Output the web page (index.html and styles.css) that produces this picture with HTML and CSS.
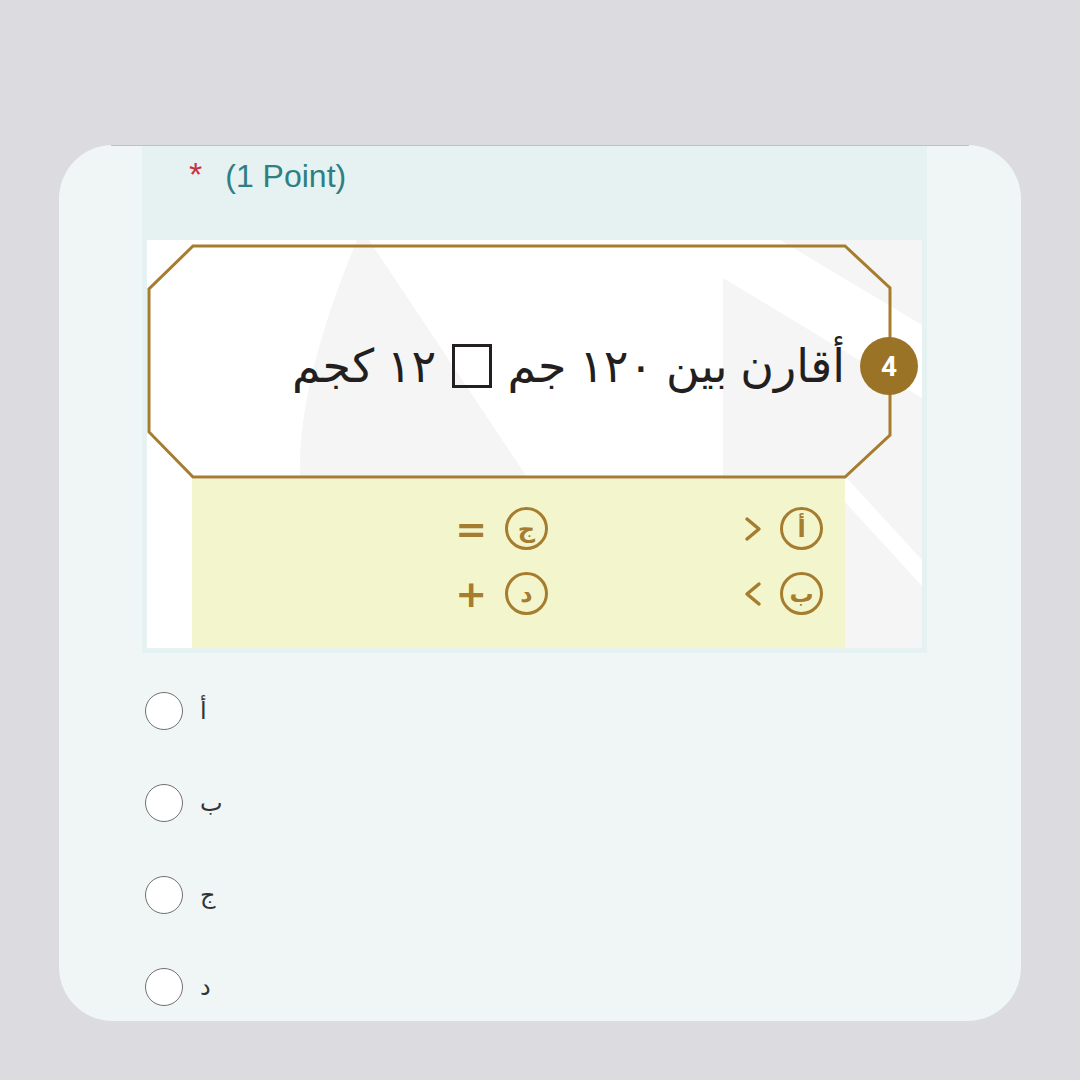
FILE: index.html
```html
<!DOCTYPE html>
<html lang="en">
<head>
<meta charset="utf-8">
<title>Question</title>
<link rel="stylesheet" href="styles.css">
</head>
<body>
<div class="card">
  <div class="topline"></div>
  <div class="panel">
    <div class="header">
      <span class="req">*</span>
      <span class="points">(1 Point)</span>
    </div>
    <div class="picture">
      <svg class="deco" viewBox="0 0 775 408" width="775" height="408">
        <polygon points="633,0 775,0 775,85" fill="#f5f5f5"/>
        <polygon points="576,38 775,158 775,408 576,408" fill="#f5f5f5"/>
        <polygon points="698,236 775,320 775,346 698,262" fill="#ffffff"/>
        <path d="M210,0 L222,0 L380,237 L153,237 Q150,144 210,0 Z" fill="#f5f5f5"/>
        <polygon points="46,6 698,6 743,48 743,195 698,237 46,237 2,192 2,49" fill="none" stroke="#a67c2e" stroke-width="3"/>
      </svg>
      <div class="q-row">
        <p class="q-text" dir="rtl">أقارن بين ١٢٠ جم <span class="blank"></span> ١٢ كجم</p>
        <span class="badge">4</span>
      </div>
      <div class="choices" dir="rtl">
        <div class="choice"><span class="sym">
          <svg width="18" height="26" viewBox="0 0 18 26"><polyline points="3,3 15,13 3,23" fill="none" stroke="#a67c2e" stroke-width="3.5" stroke-linecap="round" stroke-linejoin="round"/></svg>
        </span><span class="ring">أ</span></div>
        <div class="choice"><span class="sym eq">=</span><span class="ring">ج</span></div>
        <div class="choice"><span class="sym">
          <svg width="18" height="26" viewBox="0 0 18 26"><polyline points="15,3 3,13 15,23" fill="none" stroke="#a67c2e" stroke-width="3.5" stroke-linecap="round" stroke-linejoin="round"/></svg>
        </span><span class="ring">ب</span></div>
        <div class="choice"><span class="sym eq">+</span><span class="ring">د</span></div>
      </div>
    </div>
  </div>
  <ul class="options">
    <li class="option"><span class="radio"></span><span class="label">أ</span></li>
    <li class="option"><span class="radio"></span><span class="label">ب</span></li>
    <li class="option"><span class="radio"></span><span class="label">ج</span></li>
    <li class="option"><span class="radio"></span><span class="label">د</span></li>
  </ul>
</div>
</body>
</html>
```

FILE: styles.css
```css
* { box-sizing: border-box; }

html, body {
  margin: 0;
  padding: 0;
  background: #dcdbe0;
  font-family: "Liberation Sans", "DejaVu Sans", sans-serif;
}

body {
  width: 1080px;
  height: 1080px;
  overflow: hidden;
}

.card {
  margin: 145px 0 0 59px;
  width: 962px;
  height: 876px;
  border-radius: 54px;
  background: #f0f6f6;
  overflow: hidden;
}

.topline {
  height: 1px;
  margin: 0 52px;
  background: #a9cbcf;
}

.panel {
  margin-left: 83px;
  width: 785px;
  background: #e6f1f2;
  padding: 0 5px 5px 5px;
}

.header {
  height: 94px;
  display: flex;
  align-items: flex-start;
  padding-left: 42px;
  padding-top: 14px;
  gap: 23px;
}

.req {
  color: #c8313f;
  font-size: 34px;
  line-height: 1;
  margin-top: -3px;
}

.points {
  color: #2f7f82;
  font-size: 32px;
  line-height: 1;
}

.picture {
  position: relative;
  width: 775px;
  height: 408px;
  background: #ffffff;
}

.deco {
  position: absolute;
  left: 0;
  top: 0;
  display: block;
}

.q-row {
  position: relative;
  height: 239px;
  padding-top: 13px;
  padding-right: 4px;
  display: flex;
  justify-content: flex-end;
  align-items: center;
  gap: 15px;
}

.q-text {
  margin: 0;
  font-family: "DejaVu Sans", sans-serif;
  font-size: 46px;
  color: #231f20;
  line-height: 1;
  white-space: nowrap;
  word-spacing: -2px;
}

.blank {
  display: inline-block;
  width: 40px;
  height: 44px;
  border: 3px solid #231f20;
  vertical-align: -6px;
  margin: 0 3px;
}

.badge {
  width: 58px;
  height: 58px;
  border-radius: 50%;
  background: #9b7327;
  color: #ffffff;
  font-family: Roboto, sans-serif;
  font-weight: 700;
  font-size: 28px;
  display: flex;
  align-items: center;
  justify-content: center;
}

.choices {
  position: relative;
  margin-left: 45px;
  width: 653px;
  height: 169px;
  background: #f3f6cc;
  display: grid;
  grid-template-columns: 275px 1fr;
  grid-auto-rows: 43px;
  row-gap: 22px;
  padding: 28px 22px 0 0;
  justify-items: start;
}

.choice {
  direction: ltr;
  display: inline-flex;
  align-items: center;
  gap: 18px;
}

.sym {
  color: #a67c2e;
  display: inline-flex;
  align-items: center;
}

.eq {
  font-family: "DejaVu Sans", sans-serif;
  font-weight: 700;
  font-size: 38px;
  line-height: 1;
}

.ring {
  width: 43px;
  height: 43px;
  border: 3px solid #a67c2e;
  border-radius: 50%;
  color: #a67c2e;
  font-family: "DejaVu Sans", sans-serif;
  font-weight: 700;
  font-size: 24px;
  display: flex;
  align-items: center;
  justify-content: center;
  line-height: 1;
}

.options {
  list-style: none;
  margin: 12px 0 0 86px;
  padding: 0;
}

.option {
  height: 92px;
  display: flex;
  align-items: center;
  gap: 17px;
}

.radio {
  width: 38px;
  height: 38px;
  border: 1.5px solid #707070;
  border-radius: 50%;
  background: #ffffff;
}

.label {
  font-family: "DejaVu Sans", sans-serif;
  font-size: 24px;
  color: #333333;
}
```
